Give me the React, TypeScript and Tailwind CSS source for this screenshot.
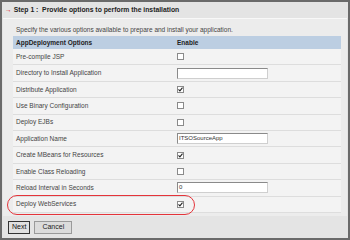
import React from 'react';

const rows: { label: string; kind: 'check' | 'text'; checked?: boolean; value?: string }[] = [
  { label: 'Pre-compile JSP', kind: 'check' },
  { label: 'Directory to Install Application', kind: 'text', value: '' },
  { label: 'Distribute Application', kind: 'check', checked: true },
  { label: 'Use Binary Configuration', kind: 'check' },
  { label: 'Deploy EJBs', kind: 'check' },
  { label: 'Application Name', kind: 'text', value: 'ITSOSourceApp' },
  { label: 'Create MBeans for Resources', kind: 'check', checked: true },
  { label: 'Enable Class Reloading', kind: 'check' },
  { label: 'Reload Interval in Seconds', kind: 'text', value: '0' },
  { label: 'Deploy WebServices', kind: 'check', checked: true },
];

function Box({ checked }: { checked?: boolean }) {
  return (
    <div className="w-[7px] h-[7px] border border-[#8a8a8a] bg-white flex items-center justify-center">
      {checked && (
        <svg width="5" height="5" viewBox="0 0 6 6">
          <path d="M0.6 2.8 L2.3 4.6 L5.4 0.8" fill="none" stroke="#222" strokeWidth="1.3" />
        </svg>
      )}
    </div>
  );
}

export default function App() {
  return (
    <div
      className="w-[350px] h-[240px] border-2 border-[#6a6a6a] bg-[#e4e4e4] flex flex-col text-[#333]"
      style={{ fontFamily: '"Liberation Sans", Arial, sans-serif' }}
    >
      {/* Step title */}
      <div className="h-[16px] flex items-center pl-[3px] text-[6.8px] font-bold text-[#222]">
        <span className="text-[#e02020] mr-[2px]">→</span>
        <span>Step 1 :&nbsp;&nbsp;Provide options to perform the installation</span>
      </div>

      <div className="mx-[1px] bg-[#ececec] border-t border-[#f8f8f8] pt-[4px] pb-[3px] pl-[10px] pr-[6px]">
        <div className="text-[6.5px] h-[13px] flex items-center pl-[3px] text-[#444]">
          Specify the various options available to prepare and install your application.
        </div>

        <div className="relative">
          <div className="h-[13px] bg-[#bccee2] flex items-center text-[6.5px] font-bold text-[#222]">
            <div className="w-[164px] pl-[3px]">AppDeployment Options</div>
            <div>Enable</div>
          </div>
          {rows.map((r) => (
            <div
              key={r.label}
              className="h-[16.4px] border-b border-[#dddddd] bg-[#f3f3f3] flex items-center text-[6.5px] text-[#444]"
            >
              <div className="w-[164px] pl-[3px]">{r.label}</div>
              {r.kind === 'check' ? (
                <Box checked={r.checked} />
              ) : (
                <div className="w-[91px] h-[11px] border border-[#8a8a8a] border-b-[#cfcfcf] border-r-[#cfcfcf] bg-white flex items-center pl-[1px] text-[6px] text-[#333]">
                  {r.value}
                </div>
              )}
            </div>
          ))}
          {/* highlight ring */}
          <div className="absolute left-[-6px] top-[159px] w-[188px] h-[20px] rounded-full border-[1.5px] border-[#e4343a]" />
        </div>
      </div>

      <div className="flex gap-[4px] pl-[6px] pt-[5px]">
        <button className="h-[13px] px-[3px] border border-[#333] bg-[#e0e0e0] text-[7px] text-[#111] flex items-center">
          Next
        </button>
        <button className="h-[13px] px-[7px] border border-[#9a9a9a] bg-[#dcdcdc] text-[7px] text-[#222] flex items-center">
          Cancel
        </button>
      </div>
    </div>
  );
}
